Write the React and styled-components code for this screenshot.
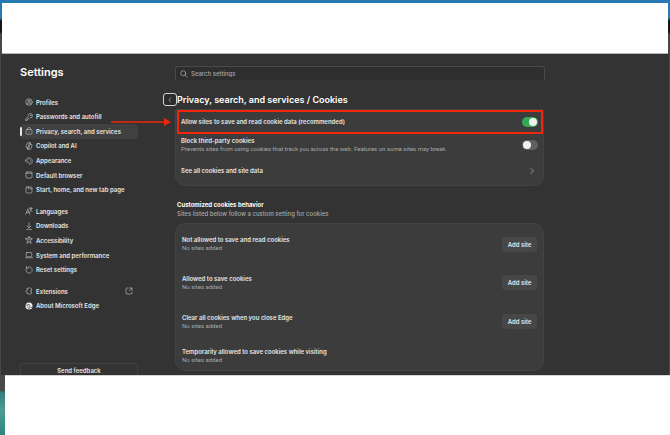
import React, { useState } from "react";
import styled, { createGlobalStyle } from "styled-components";

const GlobalStyle = createGlobalStyle`
  * {
    box-sizing: border-box;
  }
  body {
    margin: 0;
    background-color: #333333;
    color: #e6e6e6;
    font-family: Inter, "Liberation Sans", sans-serif;
    font-size: 6px;
    font-weight: 600;
  }
  h1, h2, h3, p, ul {
    margin: 0;
    padding: 0;
  }
  button, input {
    font-family: inherit;
    color: inherit;
  }
`;

const Desktop = styled.div`
  position: relative;
  display: flex;
  flex-direction: column;
  min-height: 100vh;
  padding-top: 3px;
  background: linear-gradient(
    #2779b4 0 18px,
    #161616 21px 32px,
    #484848 34px 390px,
    #367f7c 393px,
    #4d9c94 410px,
    #2f8580
  );
`;
const TopPanel = styled.div`
  height: 51px;
  margin: 0 2px;
  background-color: #ffffff;
  border-bottom: 1px solid #b5b5b5;
`;
const BottomPanel = styled.div`
  flex: 1;
  margin-left: 5px;
  background-color: #ffffff;
  border-top: 1px solid #d5d5d5;
`;
const SettingsWindow = styled.div`
  display: flex;
  gap: 25px;
  margin: 0 1px;
  padding: 12px 124px 4px 19px;
  background-color: #333333;
`;

const Sidebar = styled.aside`
  display: flex;
  flex-direction: column;
  flex-shrink: 0;
  width: 118px;
  margin-bottom: -4px;
  h1 {
    height: 29px;
    font-size: 11px;
    font-weight: 600;
    line-height: 13px;
    color: #ffffff;
  }
`;
const NavGroup = styled.ul`
  display: grid;
  grid-auto-rows: 1fr;
  height: ${(props) => props.$height}px;
  margin-bottom: 7px;
  list-style: none;
`;
const NavLink = styled.a`
  display: flex;
  align-items: center;
  gap: 3px;
  height: 100%;
  padding-right: 5px;
  border-radius: 4px;
  background-color: ${(props) => (props.$active ? "#404040" : "transparent")};
  color: #e6e6e6;
  text-decoration: none;
  white-space: nowrap;
  &::before {
    content: "";
    width: 2px;
    height: 9px;
    border-radius: 1px;
    background-color: ${(props) => (props.$active ? "#e8e8e8" : "transparent")};
  }
  span {
    flex: 1;
  }
`;
const Glyph = styled.svg`
  flex-shrink: 0;
  width: 8px;
  height: 8px;
  fill: none;
  stroke: #bcbcbc;
  stroke-width: 1.3;
  stroke-linecap: round;
  stroke-linejoin: round;
`;
const FeedbackButton = styled.button`
  height: 12px;
  margin-top: auto;
  padding: 3px 0 0;
  border: 1px solid #404040;
  border-bottom: none;
  border-radius: 3px 3px 0 0;
  background-color: transparent;
  font-size: 6px;
  font-weight: 600;
  line-height: 8px;
`;

const Main = styled.main`
  flex: 1;
  min-width: 0;
`;
const Content = styled.div`
  margin-left: 12px;
`;
const SearchBox = styled.label`
  display: flex;
  align-items: center;
  gap: 3px;
  height: 15px;
  margin-left: 12px;
  padding-left: 4px;
  border: 1px solid #4a4a4a;
  border-bottom-color: #333333;
  border-radius: 3px;
  background-color: #2e2e2e;
  input {
    flex: 1;
    padding: 0;
    border: none;
    outline: none;
    background-color: transparent;
    font-size: 6px;
    font-weight: 500;
  }
  input::placeholder {
    color: #a6a6a6;
  }
`;
const TitleRow = styled.div`
  display: flex;
  align-items: center;
  height: 13px;
  margin: 12px 0 3px;
  h2 {
    font-size: 9px;
    font-weight: 600;
    line-height: 13px;
    color: #ffffff;
    white-space: pre;
  }
`;
const BackButton = styled.button`
  display: flex;
  align-items: center;
  justify-content: center;
  width: 14px;
  height: 13px;
  padding: 0;
  border: 1px solid #d0d4da;
  border-radius: 3px;
  background-color: #2c2c2c;
`;
const Card = styled.section`
  margin-right: 1px;
  padding: ${(props) => props.$padding};
  border: 1px solid #434343;
  border-radius: ${(props) => props.$radius};
  background-color: #3c3c3c;
`;
const SiteLists = styled.div`
  display: grid;
  grid-auto-rows: 1fr;
  height: 116px;
`;
const Row = styled.div`
  display: flex;
  align-items: center;
  justify-content: space-between;
  height: ${(props) => (props.$height ? `${props.$height}px` : "auto")};
  padding: 0 5px;
`;
const MarkedRow = styled(Row)`
  margin-left: 1px;
  padding: 0 3px 0 2px;
  border: 2px solid #f0260c;
`;
const RowTitle = styled.h3`
  font-size: 6px;
  font-weight: 600;
  line-height: 8px;
`;
const Hint = styled.p`
  font-family: Roboto, "Liberation Sans", sans-serif;
  font-size: 6px;
  font-weight: 400;
  line-height: 8px;
  color: #a8a8a8;
`;
const Switch = styled.input`
  appearance: none;
  width: 16px;
  height: 10px;
  margin: 0;
  padding: 1px;
  border-radius: 5px;
  background-color: #606060;
  display: flex;
  &::before {
    content: "";
    width: 8px;
    height: 8px;
    border-radius: 50%;
    background-color: #f0f0f0;
  }
  &:checked {
    justify-content: flex-end;
    background-color: #34a853;
  }
`;
const LinkButton = styled.button`
  display: flex;
  align-items: center;
  justify-content: space-between;
  width: 100%;
  height: 29px;
  padding: 0 7px 0 5px;
  border: none;
  background-color: transparent;
  font-size: 6px;
  font-weight: 600;
`;
const SectionHeader = styled.header`
  margin: 15px 0 4px 2px;
  h3 {
    font-size: 6px;
    font-weight: 700;
    line-height: 8px;
    color: #ffffff;
  }
  p {
    font-size: 6px;
    font-weight: 500;
    line-height: 10px;
    color: #a8a8a8;
  }
`;
const AddButton = styled.button`
  width: 35px;
  height: 15px;
  padding: 0;
  border: none;
  border-radius: 3px;
  background-color: #474747;
  font-size: 6px;
  font-weight: 600;
`;
const Arrow = styled.svg`
  position: absolute;
  left: 111px;
  top: 118px;
  width: 60px;
  height: 8px;
  fill: #f0260c;
`;

const icons = {
  profile: (
    <>
      <circle cx="8" cy="8" r="6.5" />
      <circle cx="8" cy="6" r="2.2" />
      <path d="M4.5 12.5V10h7v2.5" />
    </>
  ),
  key: (
    <>
      <path d="M1.5 14.5v-3l5-5a4.3 4.3 0 1 1 3 3L8 11H6v1.8H4v1.7z" />
      <circle cx="11.3" cy="4.7" r=".6" />
    </>
  ),
  lock: (
    <>
      <rect x="2" y="5" width="12" height="9.5" rx="2" />
      <path d="M5 5V4a3 3 0 0 1 6 0v1M8 9v1.5" />
    </>
  ),
  copilot: (
    <path d="M10.5 1.5H6a2 2 0 0 0-2 1.5L2 9a2 2 0 0 0 2 2.5h2L8.5 3M5.5 14.5H10a2 2 0 0 0 2-1.5l2-6a2 2 0 0 0-2-2.5h-2L7.5 13M8.5 1.5h2l1 3M7.5 14.5h-2l-1-3" />
  ),
  palette: (
    <>
      <path d="M1.5 7C2 3 6 .8 10 2s5.5 5.5 4 9-5 4.5-6 2.5c-.6-1.3.6-2.3-.5-3.5C6 8.5 4 11 2.3 9.7c-.7-.6-.9-1.5-.8-2.7z" />
      <path d="M5 5.5h.1M8.5 4.5h.1M11.5 6.5h.1M11.5 10h.1" />
    </>
  ),
  browser: (
    <>
      <rect x="2" y="2" width="12" height="12" rx="2" />
      <path d="M2 4.5h12" />
    </>
  ),
  tab: (
    <>
      <rect x="2" y="2" width="12" height="12" rx="2" />
      <path d="M7 2v3.5h7" />
    </>
  ),
  language: (
    <path d="M1.5 14.5L5.5 4l4 10.500M3 11h5M8 2.500h6.500M11.500 1v1.500M13.500 2.500c-.3 3-1.500 5-4 6.500M10 5c.8 2 2 3.300 4 4" />
  ),
  download: <path d="M8 1.500v10M4 8l4 4 4-4M3 14.800h10" />,
  accessibility: (
    <>
      <circle cx="8" cy="2.800" r="1.800" />
      <path d="M2 4.500l4 1.800h4l4-1.800.5 1.800L10.500 8.500l2 5.500-1.700.8L8 10l-2.800 4.800-1.700-.8 2-5.500-4-2.200z" />
    </>
  ),
  laptop: (
    <>
      <rect x="2.500" y="3" width="11" height="8.500" rx="1" />
      <path d="M1 13.500h14" />
    </>
  ),
  reset: <path d="M3 4.200a6.300 6.300 0 1 0 3.500-2.400M3 1v3.500h3.500" />,
  puzzle: (
    <path d="M4.500 2.500H8c.5-2 3.500-1.500 3.500.5l1.500.5v3c-3-.5-3 3.500 0 3v3l-1.500.5c0 2-3 2.500-3.500.5H4.500v-3c-4 .5-4-5 0-4.500z" />
  ),
  edge: (
    <>
      <circle cx="8" cy="8" r="7" fill="#f2f2f2" stroke="none" />
      <path d="M2 7c3-3.500 8-2.500 8 .5 0 1.500-1 1.500-1 2.500 0 1.500 3 1.500 5 .3M5.500 7.500c-1 3 1 6 4 6.500" stroke="#333333" />
    </>
  ),
  open: <path d="M6 2H4a2 2 0 0 0-2 2v8a2 2 0 0 0 2 2h8a2 2 0 0 0 2-2v-2M9 2h5v5M14 2L8.500 7.500" />,
  search: (
    <>
      <circle cx="6.500" cy="6.500" r="5" />
      <path d="M10.500 10.500l4 4" />
    </>
  ),
  back: <path d="M9.500 4L5.500 8l4 4" />,
  forward: <path d="M6 3l5 5-5 5" />,
};

const Icon = ({ name }) => (
  <Glyph viewBox="0 0 16 16" aria-hidden="true">
    {icons[name]}
  </Glyph>
);

const navGroups = [
  {
    height: 102,
    items: [
      ["profile", "Profiles"],
      ["key", "Passwords and autofill"],
      ["lock", "Privacy, search, and services"],
      ["copilot", "Copilot and AI"],
      ["palette", "Appearance"],
      ["browser", "Default browser"],
      ["tab", "Start, home, and new tab page"],
    ],
  },
  {
    height: 73,
    items: [
      ["language", "Languages"],
      ["download", "Downloads"],
      ["accessibility", "Accessibility"],
      ["laptop", "System and performance"],
      ["reset", "Reset settings"],
    ],
  },
  {
    height: 29,
    items: [
      ["puzzle", "Extensions"],
      ["edge", "About Microsoft Edge"],
    ],
  },
];

const siteLists = [
  "Not allowed to save and read cookies",
  "Allowed to save cookies",
  "Clear all cookies when you close Edge",
];

const App = () => {
  const [allowCookies, setAllowCookies] = useState(true);
  const [blockThirdParty, setBlockThirdParty] = useState(false);

  return (
    <Desktop>
      <GlobalStyle />
      <TopPanel />
      <SettingsWindow>
        <Sidebar>
          <h1>Settings</h1>
          <nav>
            {navGroups.map((group) => (
              <NavGroup key={group.height} $height={group.height}>
                {group.items.map(([icon, label]) => (
                  <li key={label}>
                    <NavLink href="#" $active={icon === "lock"}>
                      <Icon name={icon} />
                      <span>{label}</span>
                      {icon === "puzzle" && <Icon name="open" />}
                    </NavLink>
                  </li>
                ))}
              </NavGroup>
            ))}
          </nav>
          <FeedbackButton>Send feedback</FeedbackButton>
        </Sidebar>
        <Main>
          <SearchBox>
            <Icon name="search" />
            <input type="text" placeholder="Search settings" aria-label="Search settings" />
          </SearchBox>
          <TitleRow>
            <BackButton aria-label="Back">
              <Icon name="back" />
            </BackButton>
            <h2>Privacy, search, and services / Cookies</h2>
          </TitleRow>
          <Content>
            <Card $padding="0" $radius="2px 2px 10px 10px">
              <MarkedRow $height={24}>
                <RowTitle as="label" htmlFor="allow">
                  Allow sites to save and read cookie data (recommended)
                </RowTitle>
                <Switch
                  id="allow"
                  type="checkbox"
                  checked={allowCookies}
                  onChange={(e) => setAllowCookies(e.target.checked)}
                />
              </MarkedRow>
              <Row $height={22}>
                <div>
                  <RowTitle as="label" htmlFor="block">
                    Block third-party cookies
                  </RowTitle>
                  <Hint>
                    Prevents sites from using cookies that track you across the web. Features on some sites may break.
                  </Hint>
                </div>
                <Switch
                  id="block"
                  type="checkbox"
                  checked={blockThirdParty}
                  onChange={(e) => setBlockThirdParty(e.target.checked)}
                />
              </Row>
              <LinkButton>
                See all cookies and site data
                <Icon name="forward" />
              </LinkButton>
            </Card>
            <SectionHeader>
              <h3>Customized cookies behavior</h3>
              <p>Sites listed below follow a custom setting for cookies</p>
            </SectionHeader>
            <Card $padding="1px 1px 0" $radius="10px">
              <SiteLists>
                {siteLists.map((label) => (
                  <Row key={label}>
                    <div>
                      <RowTitle>{label}</RowTitle>
                      <Hint>No sites added</Hint>
                    </div>
                    <AddButton>Add site</AddButton>
                  </Row>
                ))}
              </SiteLists>
              <Row $height={29}>
                <div>
                  <RowTitle>Temporarily allowed to save cookies while visiting</RowTitle>
                  <Hint>No sites added</Hint>
                </div>
              </Row>
            </Card>
          </Content>
        </Main>
      </SettingsWindow>
      <BottomPanel />
      <Arrow viewBox="0 0 60 8" aria-hidden="true">
        <path d="M0 3.200h53V0l7 4-7 4V4.800H0z" />
      </Arrow>
    </Desktop>
  );
};

export default App;
